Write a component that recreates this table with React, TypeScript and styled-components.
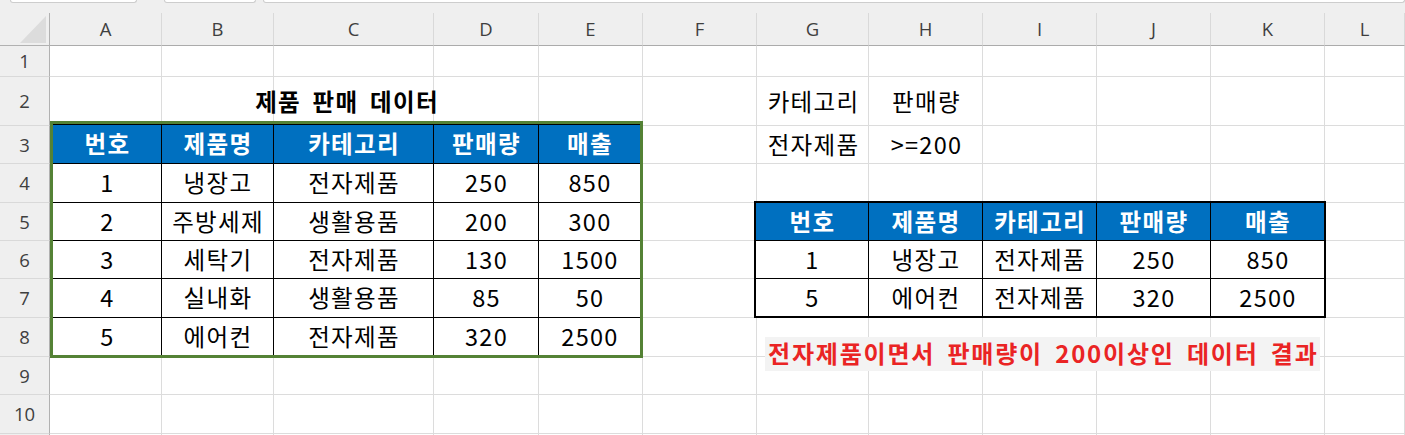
import React from "react";
import styled, { createGlobalStyle } from "styled-components";

const GlobalStyle = createGlobalStyle`
  html, body { margin: 0; padding: 0; background: #ffffff; }
  body { overflow: hidden; font-family: "Noto Sans CJK KR", "Noto Sans", sans-serif; }
`;

const KR = `"Noto Sans CJK KR", "Noto Sans", sans-serif`;
const UI = `"Open Sans", "Noto Sans", sans-serif`;

const COL_WIDTHS = [50, 112, 112, 160, 105, 104, 114, 112, 114, 114, 114, 114];
const ROW_HEIGHTS = [33, 31, 49, 38, 39, 38, 38, 39, 39, 38, 39];
const LETTERS = ["A", "B", "C", "D", "E", "F", "G", "H", "I", "J", "K", "L"];
const ROW_COUNT = 11;
const LABELLED_ROWS = 10;

const Frame = styled.div`
  width: 1405px;
  height: 435px;
  overflow: hidden;
  background: #efefef;
  display: flex;
  flex-direction: column;
`;

const TopStrip = styled.div`
  flex: none;
  height: 13px;
  display: flex;
  align-items: flex-start;
  overflow: hidden;
`;

const TabStub = styled.div<{ $w?: number; $gap: number }>`
  flex: ${(p) => (p.$w ? "none" : "1")};
  width: ${(p) => (p.$w ? `${p.$w}px` : "auto")};
  margin-left: ${(p) => p.$gap}px;
  height: 2px;
  background: #ffffff;
  border: 1px solid #cdcdcd;
  border-top: none;
  border-radius: 0 0 5px 5px;
`;

const Sheet = styled.div`
  flex: 1;
  display: grid;
  grid-template-columns: ${COL_WIDTHS.map((w) => `${w}px`).join(" ")} 1fr;
  grid-template-rows: ${ROW_HEIGHTS.map((h) => `${h}px`).join(" ")} 1fr;
  background: #ffffff;
  overflow: hidden;
`;

const Corner = styled.div`
  grid-row: 1;
  grid-column: 1;
  background: #efefef;
  border-right: 1px solid #b1b1b1;
  border-bottom: 1px solid #b1b1b1;
  box-sizing: border-box;
  display: flex;
  justify-content: flex-end;
  align-items: flex-end;
  padding: 0 3px 2px 0;
`;

const ColHead = styled.div<{ $col: number }>`
  grid-row: 1;
  grid-column: ${(p) => p.$col};
  background: #efefef;
  border-right: 1px solid #d9d9d9;
  border-bottom: 1px solid #ababab;
  box-sizing: border-box;
  display: flex;
  align-items: center;
  justify-content: center;
  font-family: ${UI};
  font-size: 18.5px;
  color: #3f3f3f;
  line-height: 1;
  padding-top: 1px;
`;

const RowHead = styled.div<{ $row: number }>`
  grid-row: ${(p) => p.$row};
  grid-column: 1;
  background: #efefef;
  border-right: 1px solid #b1b1b1;
  border-bottom: 1px solid #d9d9d9;
  box-sizing: border-box;
  display: flex;
  align-items: center;
  justify-content: center;
  font-family: ${UI};
  font-size: 18.5px;
  color: #3f3f3f;
  line-height: 1;
  padding-top: 1px;
`;

const GridCell = styled.div<{ $row: number; $col: number }>`
  grid-row: ${(p) => p.$row};
  grid-column: ${(p) => p.$col};
  border-right: 1px solid #dcdcdc;
  border-bottom: 1px solid #dcdcdc;
  box-sizing: border-box;
`;

const TextCell = styled.div<{ $row: number; $col: string; $bold?: boolean }>`
  grid-row: ${(p) => p.$row};
  grid-column: ${(p) => p.$col};
  display: flex;
  align-items: center;
  justify-content: center;
  font-family: ${KR};
  font-size: 23.5px;
  font-weight: ${(p) => (p.$bold ? 700 : 400)};
  color: #000000;
  line-height: 1;
  white-space: nowrap;
  letter-spacing: 1.3px;
  word-spacing: ${(p) => (p.$bold ? "5px" : "0")};
  padding-left: 1px;
`;

const DataTable = styled.div<{
  $row: string;
  $col: string;
  $cols: string;
  $rows: string;
  $frame: string;
  $frameW: number;
  $m: string;
}>`
  grid-row: ${(p) => p.$row};
  grid-column: ${(p) => p.$col};
  margin: ${(p) => p.$m};
  display: grid;
  grid-template-columns: ${(p) => p.$cols};
  grid-template-rows: ${(p) => p.$rows};
  border: ${(p) => p.$frameW}px solid ${(p) => p.$frame};
  background: #ffffff;
  position: relative;
  z-index: 1;
`;

const TCell = styled.div<{ $head?: boolean; $lead?: boolean; $topLine?: boolean }>`
  box-sizing: border-box;
  display: flex;
  align-items: center;
  justify-content: center;
  background: ${(p) => (p.$head ? "#0070c0" : "#ffffff")};
  color: ${(p) => (p.$head ? "#ffffff" : "#000000")};
  font-family: ${KR};
  font-size: 23.5px;
  font-weight: ${(p) => (p.$head ? 700 : 400)};
  line-height: 1;
  white-space: nowrap;
  letter-spacing: 1.3px;
  padding-left: 1px;
  border-left: ${(p) => (p.$lead ? "none" : "1px solid #000000")};
  border-top: ${(p) => (p.$topLine ? "1px solid #000000" : "none")};
`;

const Note = styled.div`
  grid-row: 9 / 11;
  grid-column: 8 / 13;
  justify-self: start;
  align-self: start;
  margin: 19px 0 0 8px;
  height: 34px;
  box-sizing: border-box;
  padding: 0 1px 2px 3px;
  display: flex;
  align-items: center;
  background: #f3f3f3;
  color: #ea2424;
  font-family: ${KR};
  font-size: 24px;
  font-weight: 700;
  line-height: 1;
  white-space: nowrap;
  letter-spacing: 1.8px;
  word-spacing: 5px;
  position: relative;
  z-index: 2;
`;

const HEADERS = ["번호", "제품명", "카테고리", "판매량", "매출"];

const DATA = [
  ["1", "냉장고", "전자제품", "250", "850"],
  ["2", "주방세제", "생활용품", "200", "300"],
  ["3", "세탁기", "전자제품", "130", "1500"],
  ["4", "실내화", "생활용품", "85", "50"],
  ["5", "에어컨", "전자제품", "320", "2500"],
];

const RESULT = [
  ["1", "냉장고", "전자제품", "250", "850"],
  ["5", "에어컨", "전자제품", "320", "2500"],
];

function TableBody({ rows, headLine }: { rows: string[][]; headLine: boolean }) {
  return (
    <>
      {HEADERS.map((h, i) => (
        <TCell key={`h${i}`} $head $lead={i === 0} $topLine={headLine}>
          {h}
        </TCell>
      ))}
      {rows.map((r, ri) =>
        r.map((v, ci) => (
          <TCell key={`${ri}-${ci}`} $lead={ci === 0} $topLine>
            {v}
          </TCell>
        ))
      )}
    </>
  );
}

export default function App() {
  const bg: React.ReactNode[] = [];
  for (let r = 1; r <= ROW_COUNT; r++) {
    for (let c = 0; c < LETTERS.length; c++) {
      bg.push(<GridCell key={`g${r}-${c}`} $row={r + 1} $col={c + 2} />);
    }
  }

  return (
    <>
      <GlobalStyle />
      <Frame>
        <TopStrip>
          <TabStub $w={125} $gap={10} />
          <TabStub $w={90} $gap={27} />
          <TabStub $gap={7} />
        </TopStrip>
        <Sheet>
          <Corner>
            <svg width="26" height="27" viewBox="0 0 26 27">
              <polygon points="26,0 26,27 0,27" fill="#dcdcdc" />
            </svg>
          </Corner>
          {LETTERS.map((l, i) => (
            <ColHead key={l} $col={i + 2}>
              {l}
            </ColHead>
          ))}
          {Array.from({ length: ROW_COUNT }, (_, i) => (
            <RowHead key={i} $row={i + 2}>
              {i < LABELLED_ROWS ? i + 1 : ""}
            </RowHead>
          ))}
          {bg}

          <TextCell $row={3} $col="2 / 7" $bold>
            제품 판매 데이터
          </TextCell>
          <TextCell $row={3} $col="8">
            카테고리
          </TextCell>
          <TextCell $row={3} $col="9">
            판매량
          </TextCell>
          <TextCell $row={4} $col="8">
            전자제품
          </TextCell>
          <TextCell $row={4} $col="9">
            &gt;=200
          </TextCell>

          <DataTable
            $row="4 / 10"
            $col="2 / 7"
            $cols="108px 112px 160px 105px 102px"
            $rows="39px 39px 38px 38px 39px 38px"
            $frame="#548235"
            $frameW={3}
            $m="-5px 0 -1px 0"
          >
            <TableBody rows={DATA} headLine />
          </DataTable>

          <DataTable
            $row="6 / 9"
            $col="8 / 13"
            $cols="112px 114px 114px 114px 114px"
            $rows="37px 38px 38px"
            $frame="#000000"
            $frameW={2}
            $m="-2px -1px 0 -3px"
          >
            <TableBody rows={RESULT} headLine={false} />
          </DataTable>

          <Note>전자제품이면서 판매량이 200이상인 데이터 결과</Note>
        </Sheet>
      </Frame>
    </>
  );
}
